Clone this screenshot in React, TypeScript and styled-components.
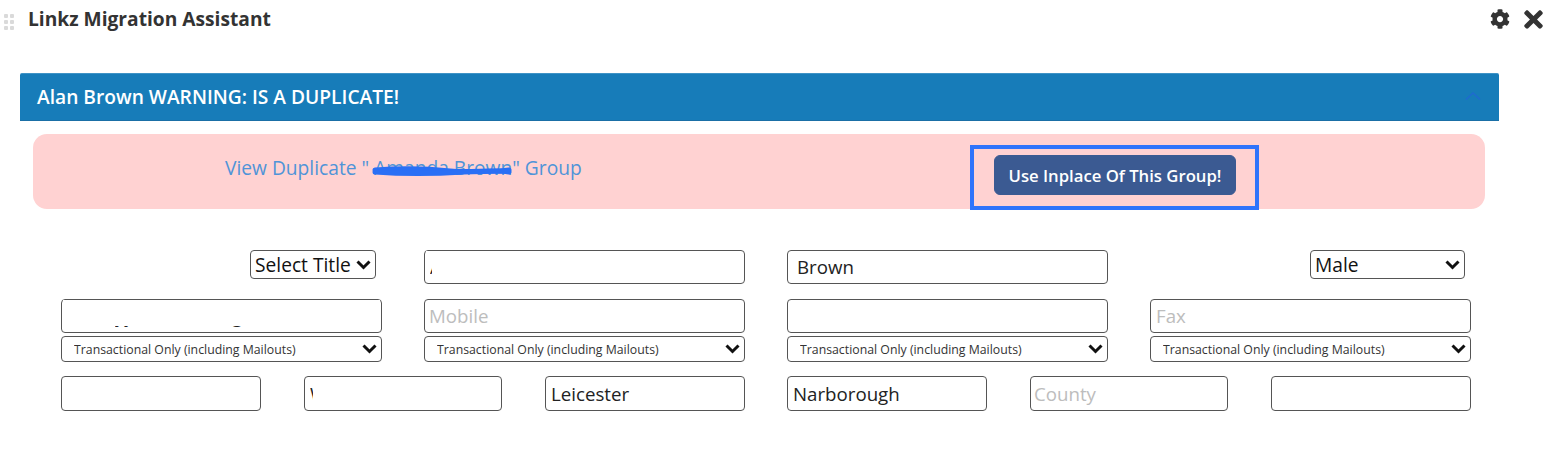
import React from "react";
import styled, { createGlobalStyle } from "styled-components";
import { FaCog, FaTimes } from "react-icons/fa";

const Global = createGlobalStyle`
  html, body { margin: 0; padding: 0; background: #fff; }
  body { font-family: "Open Sans", "Liberation Sans", sans-serif; }
  * { box-sizing: border-box; }
`;

const Page = styled.div`
  width: 1558px;
  height: 470px;
  overflow: hidden;
`;

const TitleBar = styled.header`
  height: 73px;
  padding: 5px 11px 0 4px;
  display: flex;
  align-items: flex-start;
`;

const Grip = styled.div`
  display: grid;
  grid-template-columns: 4px 4px;
  grid-auto-rows: 4px;
  gap: 2px;
  margin: 9px 14px 0 0;
  width: 10px;
`;

const GripDot = styled.span`
  background: #dadada;
  border-radius: 1px;
`;

const Title = styled.h1`
  margin: 0;
  flex: 1;
  font-size: 19.2px;
  line-height: 28px;
  font-weight: 700;
  color: #333;
`;

const Tools = styled.div`
  display: flex;
  align-items: center;
  gap: 10px;
  height: 28px;
  color: #333;
`;

const Panel = styled.section`
  margin-left: 20px;
  width: 1479px;
`;

const PanelHead = styled.div`
  height: 48px;
  background: #177cb9;
  border-top: 1px solid #3f93c6;
  border-bottom: 1px solid #1a6fa6;
  padding: 0 17px 2px;
  display: flex;
  align-items: center;
  justify-content: space-between;
  color: #fff;
  font-size: 19.2px;
  font-weight: 600;
  border-radius: 2px 2px 0 0;
`;

const Collapse = styled.svg`
  width: 16px;
  height: 8px;
  margin-right: 1px;
  fill: none;
  stroke: #1f6bd0;
  stroke-width: 1.5;
`;

const Alert = styled.div`
  margin: 13px 14px 0 13px;
  height: 75px;
  background: #ffd2d2;
  border-radius: 14px;
  display: flex;
  align-items: flex-start;
  padding-left: 192px;
`;

const LinkText = styled.a`
  position: relative;
  margin-top: 20px;
  width: 745px;
  font-size: 19.2px;
  line-height: 27px;
  color: #4f94d8;
`;

const Scribble = styled.svg`
  position: absolute;
  left: 147px;
  top: 9px;
  width: 142px;
  height: 14px;
  fill: none;
  stroke: #2a6ff5;
  stroke-linecap: round;
`;

const Highlight = styled.div`
  width: 289px;
  height: 65px;
  margin-top: 11px;
  border: 4px solid #2f74fb;
  padding: 6px 0 0 20px;
`;

const UseButton = styled.button`
  width: 242px;
  height: 40px;
  border: 1px solid #3b5a92;
  border-radius: 6px;
  background: #3b5a92;
  color: #fff;
  font: 550 16.7px "Open Sans", sans-serif;
  padding: 0;
`;

const Form = styled.div`
  margin: 41px 0 0 41px;
  width: 1410px;
  display: flex;
  flex-direction: column;
`;

const Row = styled.div<{ $top: number }>`
  display: grid;
  grid-template-columns: repeat(4, 1fr);
  column-gap: 42px;
  margin-top: ${(p) => p.$top}px;
`;

const AddressRow = styled.div`
  display: grid;
  grid-template-columns: repeat(6, 1fr);
  column-gap: 42px;
  margin-top: 14px;
  & > * { height: 35px; }
  & input { height: 35px; padding-bottom: 0; }
  & > *:nth-child(3n + 2) { margin: 0 1px; width: 198px; }
`;

const Cell = styled.div`
  display: flex;
  flex-direction: column;
  align-items: stretch;
  gap: 3px;
`;

const RightCell = styled.div<{ $inset: number }>`
  display: flex;
  justify-content: flex-end;
  padding-right: ${(p) => p.$inset}px;
`;

const FieldWrap = styled.div`
  position: relative;
  height: 34px;
`;

const Field = styled.input<{ $pad?: number }>`
  display: block;
  width: 100%;
  height: 34px;
  border: 1px solid #555;
  border-radius: 4px;
  background: #fff;
  color: #222;
  font: 400 18.7px "Open Sans", sans-serif;
  padding: 0 0 2px ${(p) => p.$pad ?? 5}px;
  outline: none;
  &::placeholder { color: #bdbdbd; opacity: 1; }
`;

const Mask = styled.span<{ $left: number; $top: number; $w: number; $h: number }>`
  position: absolute;
  left: ${(p) => p.$left}px;
  top: ${(p) => p.$top}px;
  width: ${(p) => p.$w}px;
  height: ${(p) => p.$h}px;
  background: #fff;
`;

const SelectWrap = styled.div<{ $w?: number; $h: number }>`
  position: relative;
  width: ${(p) => (p.$w ? `${p.$w}px` : "100%")};
  height: ${(p) => p.$h}px;
`;

const Select = styled.select<{ $small?: boolean }>`
  appearance: none;
  display: block;
  width: 100%;
  height: 100%;
  border: 1px solid #555;
  border-radius: 4px;
  background: #fff;
  color: ${(p) => (p.$small ? "#333" : "#111")};
  font: 400 ${(p) => (p.$small ? "12.3px" : "19.2px")} "Open Sans", sans-serif;
  padding: 0 0 ${(p) => (p.$small ? 0 : 2)}px ${(p) => (p.$small ? 12 : 4)}px;
  outline: none;
`;

const Chevron = styled.svg`
  position: absolute;
  right: 5px;
  top: 50%;
  transform: translateY(-50%);
  width: 15px;
  height: 10px;
  fill: none;
  stroke: #111;
  stroke-width: 3;
  pointer-events: none;
`;

const Arrow = () => (
  <Chevron viewBox="0 0 15 10">
    <path d="M1.5 1.5 L7.5 7.5 L13.5 1.5" />
  </Chevron>
);

const Consent = () => (
  <SelectWrap $h={26}>
    <Select $small defaultValue="t">
      <option value="t">Transactional Only (including Mailouts)</option>
    </Select>
    <Arrow />
  </SelectWrap>
);

export default function App() {
  return (
    <Page>
      <Global />
      <TitleBar>
        <Grip>
          {Array.from({ length: 6 }).map((_, i) => (
            <GripDot key={i} />
          ))}
        </Grip>
        <Title>Linkz Migration Assistant</Title>
        <Tools>
          <FaCog size={20} />
          <FaTimes size={27} />
        </Tools>
      </TitleBar>
      <Panel>
        <PanelHead>
          <span>Alan Brown WARNING: IS A DUPLICATE!</span>
          <Collapse viewBox="0 0 16 8">
            <path d="M1 7.5 L8 1 L15 7.5" />
          </Collapse>
        </PanelHead>
        <Alert>
          <LinkText>
            View Duplicate " Amanda Brown" Group
            <Scribble viewBox="0 0 142 14">
              <path strokeWidth="5" d="M3 7 C30 5 60 6 78 8 C100 10 120 6 137 9" />
              <path strokeWidth="5" d="M3 9 C30 11 60 11 92 9 C110 8 125 9 137 7" />
            </Scribble>
          </LinkText>
          <Highlight>
            <UseButton>Use Inplace Of This Group!</UseButton>
          </Highlight>
        </Alert>
        <Form>
          <Row $top={0}>
            <RightCell $inset={6}>
              <SelectWrap $w={126} $h={29}>
                <Select defaultValue="s">
                  <option value="s">Select Title</option>
                </Select>
                <Arrow />
              </SelectWrap>
            </RightCell>
            <Cell>
              <FieldWrap>
                <Field readOnly value="Alan" />
                <Mask $left={8} $top={1} $w={200} $h={32} />
                <Mask $left={2} $top={1} $w={8} $h={13} />
              </FieldWrap>
            </Cell>
            <Cell>
              <Field readOnly value="Brown" $pad={9} />
            </Cell>
            <RightCell $inset={6}>
              <SelectWrap $w={155} $h={29}>
                <Select defaultValue="m">
                  <option value="m">Male</option>
                </Select>
                <Arrow />
              </SelectWrap>
            </RightCell>
          </Row>
          <Row $top={15}>
            <Cell>
              <FieldWrap>
                <Field readOnly value="yybrownmail.gmail" $pad={53} />
                <Mask $left={2} $top={1} $w={317} $h={26} />
              </FieldWrap>
              <Consent />
            </Cell>
            <Cell>
              <Field placeholder="Mobile" $pad={4} />
              <Consent />
            </Cell>
            <Cell>
              <Field readOnly value="" />
              <Consent />
            </Cell>
            <Cell>
              <Field placeholder="Fax" />
              <Consent />
            </Cell>
          </Row>
          <AddressRow>
            <Field readOnly value="" />
            <FieldWrap>
              <Field readOnly value="Welford" />
              <Mask $left={9} $top={1} $w={180} $h={33} />
            </FieldWrap>
            <Field readOnly value="Leicester" />
            <Field readOnly value="Narborough" />
            <Field placeholder="County" $pad={3} />
            <Field readOnly value="" />
          </AddressRow>
        </Form>
      </Panel>
    </Page>
  );
}
